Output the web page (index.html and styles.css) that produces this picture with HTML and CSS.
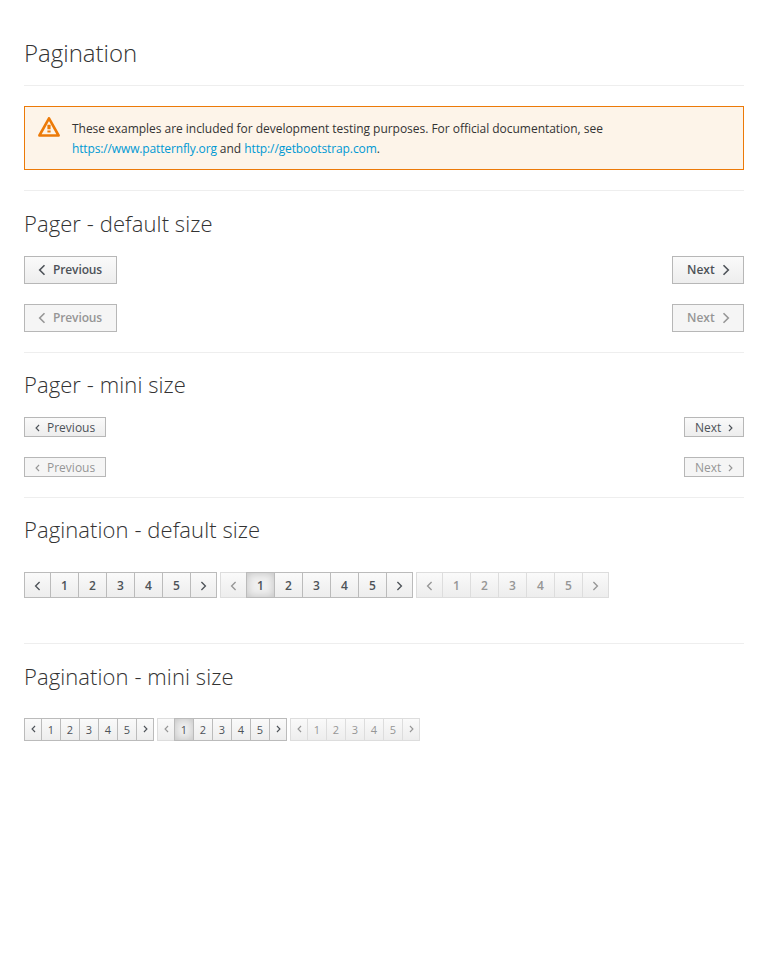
FILE: index.html
```html
<!DOCTYPE html>
<html lang="en">
<head>
<meta charset="utf-8">
<title>Pagination</title>
<link rel="stylesheet" href="styles.css">
</head>
<body>
<svg width="0" height="0" class="defs"><defs>
<symbol id="left" viewBox="0 0 8 12"><path d="M6.5 1.2 1.7 6l4.8 4.8"/></symbol>
<symbol id="right" viewBox="0 0 8 12"><path d="M1.5 1.2 6.3 6l-4.8 4.8"/></symbol>
</defs></svg>
<h1>Pagination</h1>
<hr>
<div class="alert">
<svg class="warn" viewBox="0 0 22 21"><path d="M11 1.3 20.6 18.5H1.4Z" fill="none" stroke="#ec7a08" stroke-width="2.6" stroke-linejoin="round"/><path d="M9.4 7.8h3.2v4.4H9.4zM9.4 13.4h3.2v2.2H9.4z" fill="#ec7a08"/></svg>
<p>These examples are included for development testing purposes. For official documentation, see <a class="long">https://www.patternfly.org</a> and <a>http://getbootstrap.com</a>.</p>
</div>
<hr>
<h2>Pager - default size</h2>
<div class="pager"><span class="btn prev"><svg><use href="#left"/></svg>Previous</span><span class="btn next">Next<svg><use href="#right"/></svg></span></div>
<div class="pager off"><span class="btn prev"><svg><use href="#left"/></svg>Previous</span><span class="btn next">Next<svg><use href="#right"/></svg></span></div>
<hr>
<h2 class="raised">Pager - mini size</h2>
<div class="pager mini"><span class="btn prev"><svg><use href="#left"/></svg>Previous</span><span class="btn next">Next<svg><use href="#right"/></svg></span></div>
<div class="pager mini off"><span class="btn prev"><svg><use href="#left"/></svg>Previous</span><span class="btn next">Next<svg><use href="#right"/></svg></span></div>
<hr>
<h2 class="raised">Pagination - default size</h2>
<div class="pages">
<ul><li><svg><use href="#left"/></svg></li><li>1</li><li>2</li><li>3</li><li>4</li><li>5</li><li><svg><use href="#right"/></svg></li></ul>
<ul><li class="off"><svg><use href="#left"/></svg></li><li class="active">1</li><li>2</li><li>3</li><li>4</li><li>5</li><li><svg><use href="#right"/></svg></li></ul>
<ul><li class="off"><svg><use href="#left"/></svg></li><li class="off">1</li><li class="off">2</li><li class="off">3</li><li class="off">4</li><li class="off">5</li><li class="off"><svg><use href="#right"/></svg></li></ul>
</div>
<hr>
<h2>Pagination - mini size</h2>
<div class="pages small">
<ul><li><svg><use href="#left"/></svg></li><li>1</li><li>2</li><li>3</li><li>4</li><li>5</li><li><svg><use href="#right"/></svg></li></ul>
<ul><li class="off"><svg><use href="#left"/></svg></li><li class="active">1</li><li>2</li><li>3</li><li>4</li><li>5</li><li><svg><use href="#right"/></svg></li></ul>
<ul><li class="off"><svg><use href="#left"/></svg></li><li class="off">1</li><li class="off">2</li><li class="off">3</li><li class="off">4</li><li class="off">5</li><li class="off"><svg><use href="#right"/></svg></li></ul>
</div>
</body>
</html>
```
FILE: styles.css
```css
* { box-sizing: border-box; }
body { margin: 0; padding: 40px 24px 0; font: 12px/20px "Open Sans", sans-serif; color: #333; background: #fff; }
.defs { display: block; }
h1, h2 { font-weight: 300; margin: 0; }
h1 { font-size: 24px; line-height: 26px; margin-bottom: 19px; }
h2 { font-size: 22px; line-height: 24px; margin: 0 0 21px; letter-spacing: .08px; }
hr { border: 0; border-top: 1px solid #eee; margin: 0 0 20px; }
hr:has(+ .raised) { margin-bottom: 19px; }
.alert { display: flex; height: 64px; border: 1px solid #ec7a08; background: #fdf4e9; padding: 10px 47px 10px 13px; margin-bottom: 20px; letter-spacing: -.033px; }
.alert p { margin: 2px 0 0 12px; }
.alert a { color: #0099d3; letter-spacing: -.11px; }
.alert .long { letter-spacing: -.14px; }
.warn { width: 22px; height: 21px; flex: none; }
.pager { display: flex; justify-content: space-between; margin-bottom: 20px; }
svg { flex: none; }
svg use { fill: none; stroke: currentColor; stroke-width: 1.6; }
.btn { display: flex; align-items: center; height: 28px; border: 1px solid #b7b7b7; background: linear-gradient(#fafafa, #ededed); color: #4d5258; font-weight: 600; padding: 0 13px; }
.btn svg { width: 8px; height: 12px; }
.prev { width: 93px; letter-spacing: -.12px; }
.next { width: 72px; padding-left: 14px; }
.prev svg { margin-right: 7px; }
.next svg { margin-left: 7px; }
.off .btn { color: #969696; background: #f5f5f5; }
.mini .btn { height: 20px; padding: 2px 10px 0; font-weight: 400; letter-spacing: 0; }
.mini .prev { width: 82px; }
.mini .next { width: 60px; }
.mini .btn svg { width: 5px; height: 8px; margin-top: -1px; }
.mini use { stroke-width: 1.8; }
.pages { display: flex; gap: 3px; margin: 31px 0 45px; }
ul { list-style: none; display: flex; padding: 0; margin: 0; }
li { display: flex; align-items: center; justify-content: center; width: 29px; height: 26px; margin-left: -1px; border: 1px solid #bbb; background: linear-gradient(#fafafa, #ededed); color: #4d5258; font-weight: 600; padding-top: 2px; }
li:first-child { margin-left: 0; width: 27px; }
li:last-child { width: 27px; }
li svg { width: 7px; height: 10px; margin-top: -1px; }
li.active { background: #efefef; box-shadow: inset 0 0 8px rgba(0,0,0,.2); position: relative; }
li.off { color: #969696; border-color: #ddd; }
.small { margin-top: 30px; }
h2:has(+ .small) { margin-bottom: 30px; }
.small li { width: 20px; height: 23px; font-size: 11px; font-weight: 400; padding-top: 0; }
.small li:first-child, .small li:last-child { width: 18px; }
.small li svg { width: 5px; height: 8px; }
.small use { stroke-width: 1.8; }
```
